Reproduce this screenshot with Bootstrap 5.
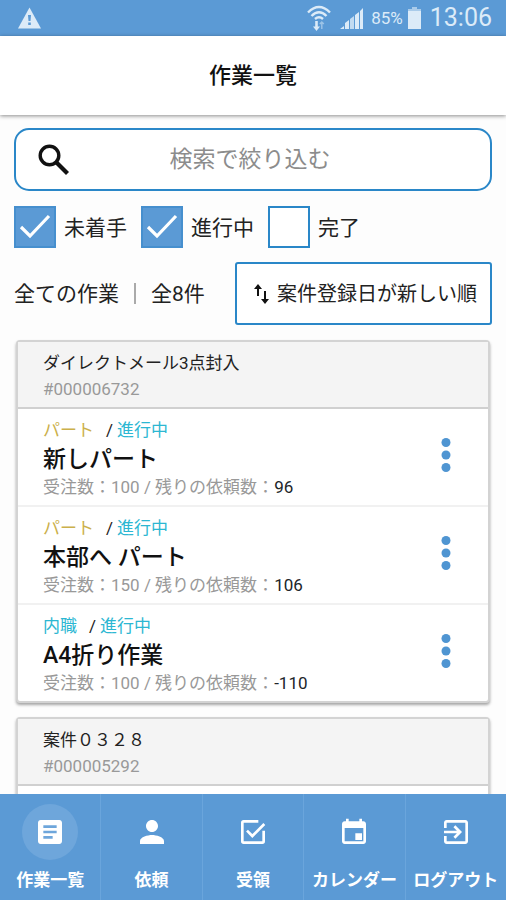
<!DOCTYPE html>
<html lang="ja">
<head>
<meta charset="utf-8">
<meta name="viewport" content="width=device-width, initial-scale=1">
<title>作業一覧</title>
<link href="https://cdn.jsdelivr.net/npm/bootstrap@5.3.0/dist/css/bootstrap.min.css" rel="stylesheet">
<style>
  :root { --brand: #5b9ad5; --line: #2a87c8; }
  body { font-family: Roboto, "Noto Sans CJK JP", sans-serif; color: #222; background: #fdfdfd; }
  svg { display: block; flex: none; }
  .status-bar { height: 36px; background: var(--brand); color: #dcebf8; padding: 0 14px 0 18px; }
  .status-pct { font-size: 17px; line-height: 20px; }
  .status-time { font-size: 25px; line-height: 38px; }
  .title-bar { height: 79px; background: #fff; box-shadow: 0 1px 4px rgba(0,0,0,.45); z-index: 1; }
  .title-bar h1 { font-size: 22px; line-height: 32px; color: #111; }
  .scroll-area { overflow-y: auto; min-height: 0; padding: 13px 14px 0; scrollbar-width: none; }
  .scroll-area::-webkit-scrollbar { display: none; }
  .search-box { height: 63px; border: 2px solid var(--line); border-radius: 15px; background: #fff; padding: 0 22px; }
  .search-box input { font-size: 23px; line-height: 32px; padding: 0 18px 0 0; text-align: center; }
  .search-box input::placeholder { color: #8c8c8c; opacity: 1; }
  .filters { margin-top: 15px; gap: 14px; font-size: 21px; line-height: 44px; height: 42px; }
  .filters .form-check-input { width: 42px; height: 42px; border: 2px solid var(--line); border-radius: 0; background-color: #fff; }
  .filters .form-check-input:checked { background-color: var(--brand); border-color: #468fce;
    background-size: 38px 38px; background-image: url("data:image/svg+xml,%3csvg xmlns='http://www.w3.org/2000/svg' viewBox='0 0 38 38'%3e%3cpath d='M5 19l9 9L33 8' fill='none' stroke='white' stroke-width='3.2'/%3e%3c/svg%3e"); }
  .summary { margin-top: 14px; font-size: 21px; line-height: 32px; }
  .summary .bar { width: 2px; height: 21px; background: #aaa; margin: 0 15px; }
  .sort-btn { height: 63px; border: 2px solid var(--line); border-radius: 3px; background: #fff; font-size: 20px; line-height: 30px; padding: 0 13px 0 15px; gap: 7px; color: #222; }
  .job-card { margin: 15px 2px 0; border: 2px solid #d3d3d3; border-radius: 4px; box-shadow: 0 2px 3px rgba(0,0,0,.35); background: #fff; font-size: 17px; line-height: 26px; }
  .job-card + .job-card { margin-top: 14px; }
  .job-head { height: 67px; background: #f4f4f4; border-bottom: 2px solid #d0d0d0; padding: 8px 25px 0; }
  .job-head h2 { font-size: 17px; line-height: 26px; }
  .muted-text { color: #999; }
  .job-row { padding: 7px 25px 6px; }
  .job-row + .job-row { border-top: 2px solid #f1f1f1; }
  .job-tags { line-height: 28px; }
  .job-row h3 { font-size: 23px; line-height: 31px; color: #111; }
  .job-row .muted-text { line-height: 24px; }
  .tag-part { color: #cbb04b; }
  .tag-home, .tag-doing { color: #2cb7d2; }
  .job-row .more-btn { padding: 2px 12px 8px; }
  .blank-row { height: 90px; }
  .tab-bar { height: 106px; background: var(--brand); }
  .tab-item { color: #fff; font-size: 17px; line-height: 24px; font-weight: 700; padding-top: 10px; }
  .tab-item + .tab-item { border-left: 1px solid #6aa5dc; }
  .tab-disc { width: 56px; height: 56px; margin-bottom: 8px; }
  .tab-item.active .tab-disc { background: #6ea6db; }
</style>
<script src="https://cdn.jsdelivr.net/npm/bootstrap@5.3.0/dist/js/bootstrap.bundle.min.js"></script>
</head>
<body class="vh-100 d-flex flex-column overflow-hidden">

<div class="status-bar d-flex align-items-center flex-shrink-0">
  <svg width="23" height="22" viewBox="0 0 23 22" aria-hidden="true"><path d="M11.500 0.500L23 21.500H0Z" fill="#dcebf8"/><path d="M10 8h3l-.5 6h-2zM10.200 15.500h2.600v2.500h-2.600z" fill="#5b9ad5"/></svg>
  <svg class="ms-auto" width="24" height="27" viewBox="0 0 24 27" fill="none" stroke="#dcebf8" aria-hidden="true"><path d="M1 7.500Q12-3.500 23 7.500M4.500 11Q12 3.500 19.500 11M8 14Q12 10.500 16 14" stroke-width="2.400"/><path d="M9.500 16v7" stroke-width="2.600"/><path d="M6 21.500h7L9.500 26z" fill="#dcebf8" stroke="none"/><path d="M14.800 24v-6M12.800 19l2-2 2 2" stroke-width="1.500" opacity=".5"/></svg>
  <svg class="ms-2" width="28" height="22" viewBox="0 0 28 22" fill="#dcebf8" aria-hidden="true"><path d="M1 22l4-3v3zM6 22v-6l4-3v9z"/><path d="M11 22V12l4-3v13z" opacity=".8"/><path d="M16 22V8l4-3v17zM21 22V4l3-3v21z"/></svg>
  <span class="status-pct ms-1">85%</span>
  <svg class="ms-1" width="15" height="22" viewBox="0 0 15 22" aria-hidden="true"><path d="M5 0h5v2h4v3H1V2h4z" fill="#a9cbea"/><path d="M1 4h13v18H1z" fill="#dcebf8"/></svg>
  <span class="status-time ms-2">13:06</span>
</div>

<header class="title-bar d-flex align-items-center justify-content-center flex-shrink-0 position-relative">
  <h1 class="mb-0 fw-medium">作業一覧</h1>
</header>

<main class="scroll-area flex-grow-1">
  <div class="search-box d-flex align-items-center">
    <label for="q"><svg width="32" height="32" viewBox="0 0 32 32" fill="none" stroke="#111" role="img" aria-label="検索"><circle cx="11.500" cy="11.500" r="9.300" stroke-width="3.400"/><path d="M18.500 18.500L29.500 29.500" stroke-width="4.200"/></svg></label>
    <input id="q" type="search" class="form-control border-0 shadow-none bg-transparent" placeholder="検索で絞り込む">
  </div>

  <div class="filters d-flex">
    <div class="d-flex gap-2"><input class="form-check-input m-0" type="checkbox" id="f1" checked><label for="f1">未着手</label></div>
    <div class="d-flex gap-2"><input class="form-check-input m-0" type="checkbox" id="f2" checked><label for="f2">進行中</label></div>
    <div class="d-flex gap-2"><input class="form-check-input m-0" type="checkbox" id="f3"><label for="f3">完了</label></div>
  </div>

  <div class="summary d-flex align-items-center">
    <span>全ての作業</span><span class="bar"></span><span>全8件</span>
    <button type="button" class="sort-btn btn d-flex align-items-center ms-auto">
      <svg width="18" height="20" viewBox="0 0 18 20" fill="#111" aria-hidden="true"><path d="M6 0L10 5H7V12H5V5H2zM13 20L17 15H14V7H12V15H9z"/></svg>
      <span>案件登録日が新しい順</span>
    </button>
  </div>

  <section class="job-card">
    <div class="job-head"><h2 class="mb-0 fw-normal">ダイレクトメール3点封入</h2><div class="muted-text">#000006732</div></div>
    <div class="job-row d-flex align-items-center justify-content-between">
      <div>
        <div class="job-tags d-flex"><span class="tag-part">パート</span><span class="ms-2 ps-1 pe-1">/</span><span class="tag-doing">進行中</span></div>
        <h3 class="mb-0 fw-medium">新しパート</h3>
        <div class="muted-text">受注数：100 / 残りの依頼数：<span class="text-dark">96</span></div>
      </div>
      <button type="button" class="more-btn btn border-0" aria-label="メニュー"><svg width="10" height="34" viewBox="0 0 10 34" fill="#4f95d2"><circle cx="5" cy="4.500" r="4.500"/><circle cx="5" cy="17" r="4.500"/><circle cx="5" cy="29.500" r="4.500"/></svg></button>
    </div>
    <div class="job-row d-flex align-items-center justify-content-between">
      <div>
        <div class="job-tags d-flex"><span class="tag-part">パート</span><span class="ms-2 ps-1 pe-1">/</span><span class="tag-doing">進行中</span></div>
        <h3 class="mb-0 fw-medium">本部へ パート</h3>
        <div class="muted-text">受注数：150 / 残りの依頼数：<span class="text-dark">106</span></div>
      </div>
      <button type="button" class="more-btn btn border-0" aria-label="メニュー"><svg width="10" height="34" viewBox="0 0 10 34" fill="#4f95d2"><circle cx="5" cy="4.500" r="4.500"/><circle cx="5" cy="17" r="4.500"/><circle cx="5" cy="29.500" r="4.500"/></svg></button>
    </div>
    <div class="job-row d-flex align-items-center justify-content-between">
      <div>
        <div class="job-tags d-flex"><span class="tag-home">内職</span><span class="ms-2 ps-1 pe-1">/</span><span class="tag-doing">進行中</span></div>
        <h3 class="mb-0 fw-medium">A4折り作業</h3>
        <div class="muted-text">受注数：100 / 残りの依頼数：<span class="text-dark">-110</span></div>
      </div>
      <button type="button" class="more-btn btn border-0" aria-label="メニュー"><svg width="10" height="34" viewBox="0 0 10 34" fill="#4f95d2"><circle cx="5" cy="4.500" r="4.500"/><circle cx="5" cy="17" r="4.500"/><circle cx="5" cy="29.500" r="4.500"/></svg></button>
    </div>
  </section>

  <section class="job-card">
    <div class="job-head"><h2 class="mb-0 fw-normal">案件０３２８</h2><div class="muted-text">#000005292</div></div>
    <div class="blank-row"></div>
  </section>
</main>

<nav class="tab-bar d-flex flex-shrink-0">
  <a href="#" class="tab-item active col d-flex flex-column align-items-center text-decoration-none text-nowrap" aria-current="page">
    <span class="tab-disc rounded-circle d-flex align-items-center justify-content-center"><svg width="32" height="32" viewBox="0 0 24 24" fill="#fff"><path d="M19 3H5c-1.100 0-2 .9-2 2v14c0 1.100.9 2 2 2h14c1.100 0 2-.9 2-2V5c0-1.100-.9-2-2-2zm-5 14H7v-2h7v2zm3-4H7v-2h10v2zm0-4H7V7h10v2z"/></svg></span>作業一覧</a>
  <a href="#" class="tab-item col d-flex flex-column align-items-center text-decoration-none text-nowrap">
    <span class="tab-disc d-flex align-items-center justify-content-center"><svg width="36" height="36" viewBox="0 0 24 24" fill="#fff"><path d="M12 12c2.210 0 4-1.790 4-4s-1.790-4-4-4-4 1.790-4 4 1.790 4 4 4zm0 2c-2.670 0-8 1.340-8 4v2h16v-2c0-2.660-5.330-4-8-4z"/></svg></span>依頼</a>
  <a href="#" class="tab-item col d-flex flex-column align-items-center text-decoration-none text-nowrap">
    <span class="tab-disc d-flex align-items-center justify-content-center"><svg width="32" height="32" viewBox="0 0 24 24" fill="none" stroke="#fff" stroke-width="2"><path d="M16 4H5a1 1 0 0 0-1 1v14a1 1 0 0 0 1 1h14a1 1 0 0 0 1-1v-8M7.500 11l4 4L20.500 6"/></svg></span>受領</a>
  <a href="#" class="tab-item col d-flex flex-column align-items-center text-decoration-none text-nowrap">
    <span class="tab-disc d-flex align-items-center justify-content-center"><svg width="32" height="32" viewBox="0 0 24 24" fill="#fff"><path d="M18 13h-5v5h5v-5zM16 2v2H8V2H6v2H5c-1.110 0-1.990.9-1.990 2L3 19c0 1.100.89 2 2 2h14c1.100 0 2-.9 2-2V6c0-1.100-.9-2-2-2h-1V2h-2zm3 17H5V9h14v10z"/></svg></span>カレンダー</a>
  <a href="#" class="tab-item col d-flex flex-column align-items-center text-decoration-none text-nowrap">
    <span class="tab-disc d-flex align-items-center justify-content-center"><svg width="32" height="32" viewBox="0 0 24 24" fill="#fff"><path d="M10.090 15.590L11.500 17l5-5-5-5-1.410 1.410L12.670 11H3v2h9.670l-2.580 2.590zM19 3H5c-1.110 0-2 .9-2 2v4h2V5h14v14H5v-4H3v4c0 1.100.89 2 2 2h14c1.100 0 2-.9 2-2V5c0-1.100-.9-2-2-2z"/></svg></span>ログアウト</a>
</nav>
</body>
</html>
